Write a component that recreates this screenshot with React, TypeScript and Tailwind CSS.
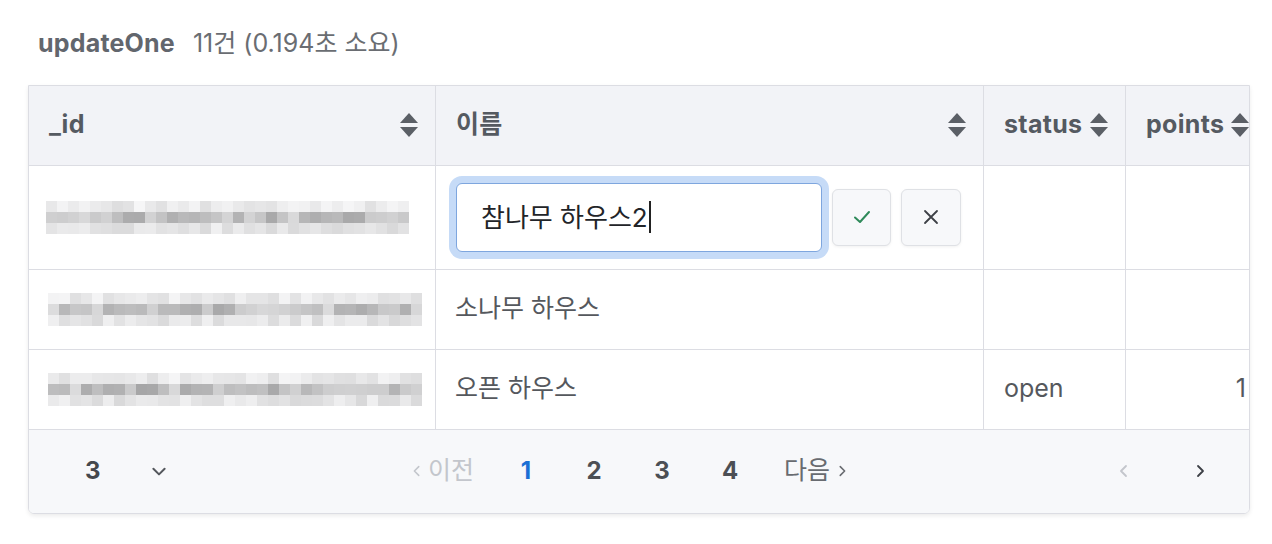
import React from "react";

const FONT = { fontFamily: '"Inter", "Noto Sans CJK KR", sans-serif' };

function SortIcon() {
  return (
    <svg width="20" height="26" viewBox="0 0 20 26" className="shrink-0">
      <path d="M10 1 L19 11 L1 11 Z" fill="#5b5f66" />
      <path d="M1 15 L19 15 L10 25 Z" fill="#5b5f66" />
    </svg>
  );
}

// pixel mosaic standing in for a blurred id value
function BlurredId({ seed, width }: { seed: number; width: number }) {
  let s = seed;
  const rand = () => {
    s = (s * 9301 + 49297) % 233280;
    return s / 233280;
  };
  const cols = Math.floor(width / 11);
  const rects: React.ReactNode[] = [];
  const bands = [
    { y: 0, base: 234, spread: 12 },
    { y: 11, base: 192, spread: 28 },
    { y: 22, base: 228, spread: 12 },
  ];
  bands.forEach((b, bi) => {
    for (let i = 0; i < cols; i++) {
      const v = Math.round(b.base + (rand() - 0.5) * 2 * b.spread);
      rects.push(
        <rect key={`${bi}-${i}`} x={i * 11} y={b.y} width="11" height="11" fill={`rgb(${v},${v},${v + 1})`} />
      );
    }
  });
  return (
    <svg width={cols * 11} height="33" viewBox={`0 0 ${cols * 11} 33`}>
      {rects}
    </svg>
  );
}

function HeaderCell({ label, width, last }: { label: string; width: string; last?: boolean }) {
  return (
    <div className={`${width} flex h-[79px] shrink-0 items-center justify-between gap-1 pl-5 pr-4 ${last ? "" : "border-r border-[#dcdde3]"}`}>
      <span className="text-[25px] font-bold tracking-[0.3px] text-[#555a61]">{label}</span>
      <SortIcon />
    </div>
  );
}

function Chevron({ dir, color, size = 16 }: { dir: "left" | "right" | "down"; color: string; size?: number }) {
  const d = dir === "left" ? "M10 3 L5 8 L10 13" : dir === "right" ? "M6 3 L11 8 L6 13" : "M3 6 L8 11 L13 6";
  return (
    <svg width={size} height={size} viewBox="0 0 16 16" fill="none" stroke={color} strokeWidth="1.8" strokeLinecap="round" strokeLinejoin="round">
      <path d={d} />
    </svg>
  );
}

export default function App() {
  const rows = [
    { seed: 17, idWidth: 374, name: "소나무 하우스", status: "", points: "" },
    { seed: 83, idWidth: 374, name: "오픈 하우스", status: "open", points: "1" },
  ];

  return (
    <div className="min-h-[544px] w-[1272px] bg-white" style={FONT}>
      <div className="pl-[38px] pt-[25px] flex items-baseline gap-[18px]">
        <span className="text-[25px] font-bold tracking-[0.2px] text-[#62666d]">updateOne</span>
        <span className="text-[25px] text-[#6a6d72]">11건 (0.194초 소요)</span>
      </div>

      <div className="ml-[28px] mt-[22px] w-[1222px] overflow-hidden rounded-b-md border border-[#dcdde3] shadow-[0_2px_4px_rgba(0,0,0,0.08)]">
        {/* header */}
        <div className="flex bg-[#f2f3f7] border-b border-[#dcdde3]">
          <HeaderCell label="_id" width="w-[407px]" />
          <HeaderCell label="이름" width="w-[548px]" />
          <HeaderCell label="status" width="w-[142px]" />
          <HeaderCell label="points" width="w-[140px]" last />
        </div>

        {/* editing row */}
        <div className="flex border-b border-[#dcdde3] bg-white">
          <div className="flex h-[103px] w-[407px] shrink-0 items-center border-r border-[#dcdde3] pl-[17px]">
            <BlurredId seed={5} width={364} />
          </div>
          <div className="flex w-[548px] shrink-0 items-center gap-[10px] border-r border-[#dcdde3] pl-[20px]">
            <div className="flex h-[69px] w-[366px] items-center rounded-md border border-[#7ea6de] bg-white pl-[24px] shadow-[0_0_0_7px_#c6dbf7]">
              <span className="text-[26px] text-[#222428]">참나무 하우스2</span>
              <span className="ml-[1px] h-[32px] w-[2px] bg-[#222]" />
            </div>
            <button className="flex h-[57px] w-[59px] items-center justify-center rounded-md border border-[#dfe1e5] bg-[#f7f8fa] shadow-[0_1px_3px_rgba(0,0,0,0.06)]">
              <svg width="20" height="20" viewBox="0 0 20 20" fill="none" stroke="#2f8a5a" strokeWidth="2" strokeLinecap="round" strokeLinejoin="round">
                <path d="M3 10.5 L8 15 L17 5" />
              </svg>
            </button>
            <button className="flex h-[57px] w-[60px] items-center justify-center rounded-md border border-[#dfe1e5] bg-[#f7f8fa] shadow-[0_1px_3px_rgba(0,0,0,0.06)]">
              <svg width="18" height="18" viewBox="0 0 18 18" fill="none" stroke="#3d4046" strokeWidth="1.8" strokeLinecap="round">
                <path d="M3 3 L15 15 M15 3 L3 15" />
              </svg>
            </button>
          </div>
          <div className="w-[142px] shrink-0 border-r border-[#dcdde3]" />
          <div className="w-[140px] shrink-0" />
        </div>

        {rows.map((r, i) => (
          <div key={i} className="flex border-b border-[#dcdde3] bg-white">
            <div className="flex h-[79px] w-[407px] shrink-0 items-center border-r border-[#dcdde3] pl-[19px]">
              <BlurredId seed={r.seed} width={r.idWidth} />
            </div>
            <div className="flex w-[548px] shrink-0 items-center border-r border-[#dcdde3] pl-[19px] text-[25px] text-[#55585d]">
              {r.name}
            </div>
            <div className="flex w-[142px] shrink-0 items-center border-r border-[#dcdde3] pl-[20px] text-[25px] text-[#55585d]">
              {r.status}
            </div>
            <div className="flex w-[140px] shrink-0 items-center justify-end pr-[20px] text-[25px] text-[#55585d]">
              {r.points}
            </div>
          </div>
        ))}

        {/* footer */}
        <div className="flex h-[83px] items-center bg-[#f7f8fa]">
          <div className="flex w-[381px] shrink-0 items-center pl-[56px]">
            <span className="text-[24px] font-bold text-[#45484d]">3</span>
            <span className="ml-[49px]">
              <Chevron dir="down" color="#55585d" size={18} />
            </span>
          </div>
          <div className="flex items-center">
            <span className="flex items-center gap-[4px] text-[25px] text-[#c3c6cc]">
              <Chevron dir="left" color="#c3c6cc" size={14} />
              이전
            </span>
            <div className="ml-[18px] flex">
              {["1", "2", "3", "4"].map((n) => (
                <span key={n} className={`flex w-[68px] justify-center text-[24px] font-bold ${n === "1" ? "text-[#1b6fd4]" : "text-[#4c4f54]"}`}>
                  {n}
                </span>
              ))}
            </div>
            <span className="ml-[20px] flex items-center gap-[5px] text-[25px] text-[#686b70]">
              다음
              <Chevron dir="right" color="#686b70" size={14} />
            </span>
          </div>
          <div className="ml-auto flex items-center gap-[60px] pr-[41px]">
            <Chevron dir="left" color="#c3c6cc" size={16} />
            <Chevron dir="right" color="#3d4046" size={16} />
          </div>
        </div>
      </div>
    </div>
  );
}
